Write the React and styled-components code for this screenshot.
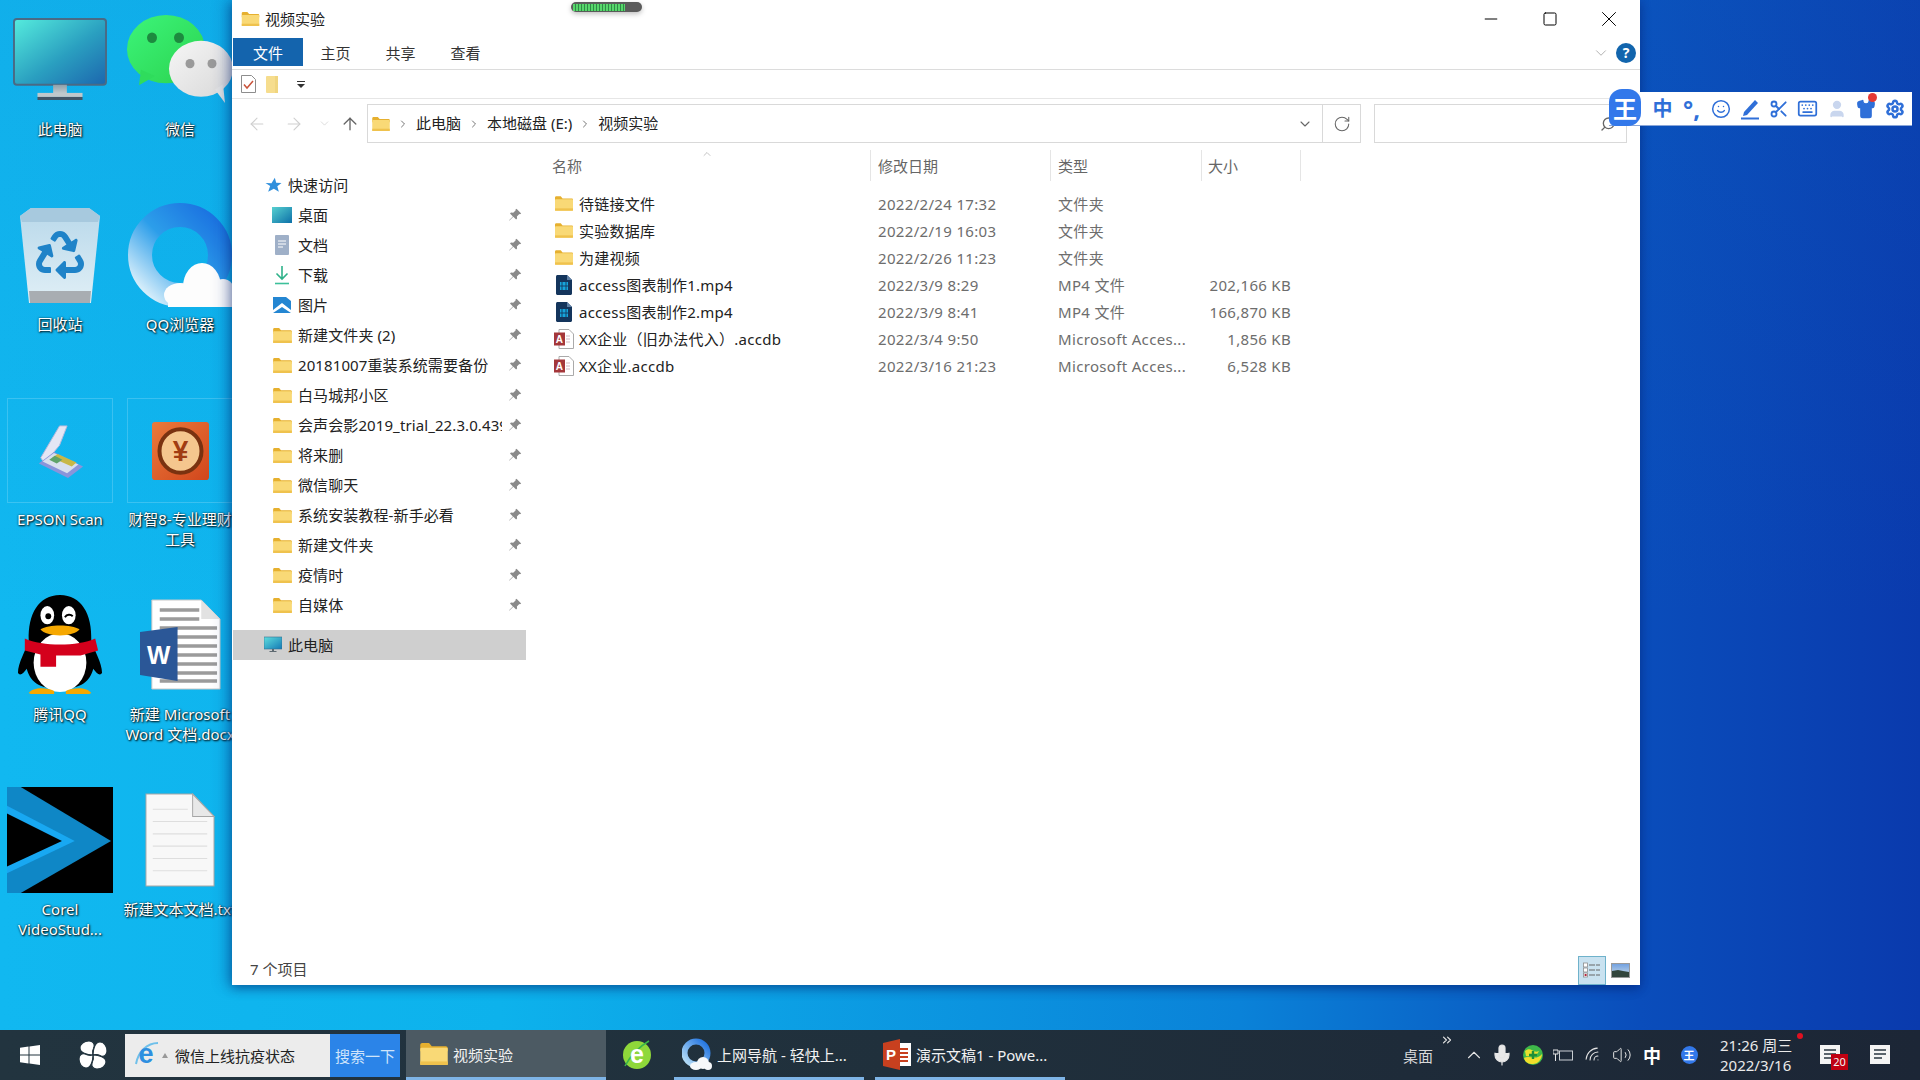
import React from 'react';
import styled, { createGlobalStyle } from 'styled-components';
import { FaRecycle } from 'react-icons/fa';
import {
  ArrowLeft,
  ArrowRight,
  ArrowUp,
  ChevronDown,
  ChevronRight,
  ChevronUp,
  ChevronsRight,
  Keyboard,
  Mic,
  Minus,
  RotateCw,
  Scissors,
  Search,
  Settings,
  Shirt,
  Smile,
  Square,
  User,
  Volume2,
  Wifi,
  X,
} from 'lucide-react';

const UI_FONT = '"Noto Sans", "Noto Sans CJK SC", sans-serif';

const GlobalStyle = createGlobalStyle`
  html, body {
    margin: 0;
    padding: 0;
    width: 1920px;
    height: 1080px;
    overflow: hidden;
    font-family: ${UI_FONT};
  }
  * {
    box-sizing: border-box;
  }
`;

/* ---------- small drawn icons ---------- */

function FolderIcon({ w = 20, h = 16 }) {
  return (
    <svg width={w} height={h} viewBox="0 0 20 16">
      <path d="M0 1.5C0 .7.6 0 1.4 0h5l2 2.4h10.2c.8 0 1.4.6 1.4 1.4V6H0z" fill="#e6b02f" />
      <rect x="0" y="3.4" width="20" height="12.6" rx="1" fill="#f9d976" />
      <rect x="0" y="13.4" width="20" height="2.6" fill="#efc24d" />
    </svg>
  );
}

function StarIcon() {
  return (
    <svg width="17" height="16" viewBox="0 0 24 24">
      <path d="M14 1l2 7.5 8 .5-6.3 4.800L20 22l-7.5-4.5L4 22l3-8.5L0 9l9 .2z" fill="#2f8fdc" />
    </svg>
  );
}

function PinIcon() {
  return (
    <svg width="14" height="14" viewBox="0 0 14 14">
      <path d="M8.5.8l4.700 4.700-1.200.7-.7-.2-2.400 2.400.2 2.200-1 1L5.300 8.800 1.500 12.600l-.4-.4L4.900 8.400 2 5.600l1-1 2.200.2L7.600 2.400l-.2-.7z" fill="#8a8a8a" />
    </svg>
  );
}

function DesktopSmall() {
  return (
    <svg width="20" height="16" viewBox="0 0 20 16">
      <defs>
        <linearGradient id="deskSmall" x1="0" y1="0" x2="1" y2="1">
          <stop offset="0" stopColor="#56d0d0" />
          <stop offset="1" stopColor="#0d70a8" />
        </linearGradient>
      </defs>
      <rect width="20" height="16" fill="url(#deskSmall)" />
    </svg>
  );
}

function DocSmall() {
  return (
    <svg width="14" height="20" viewBox="0 0 14 20">
      <rect width="14" height="20" rx="1" fill="#9fb0c8" />
      <path d="M3 6h8M3 9h8M3 12h5" stroke="#fff" strokeWidth="1" />
    </svg>
  );
}

function DownloadSmall() {
  return (
    <svg width="16" height="20" viewBox="0 0 16 20">
      <path d="M8 1v13M2.5 8.5L8 14l5.5-5.5" fill="none" stroke="#2fb28a" strokeWidth="1.6" />
      <path d="M1 18.5h14" stroke="#3cc09a" strokeWidth="1.6" />
    </svg>
  );
}

function PictureSmall() {
  return (
    <svg width="18" height="16" viewBox="0 0 18 16">
      <rect width="18" height="16" fill="#2486d2" />
      <path d="M0 13l9-7 9 7v3l-9-6-9 6z" fill="#fff" />
      <path d="M13 0h5v4z" fill="#fff" />
    </svg>
  );
}

function MonitorSmall() {
  return (
    <svg width="18" height="18" viewBox="0 0 18 18">
      <defs>
        <linearGradient id="monSmall" x1="0" y1="0" x2="1" y2="1">
          <stop offset="0" stopColor="#5fdede" />
          <stop offset="1" stopColor="#1379b5" />
        </linearGradient>
      </defs>
      <rect y="1" width="18" height="12" fill="url(#monSmall)" stroke="#35708f" strokeWidth=".6" />
      <path d="M8 13h2v2H8zM5.5 15h7v1h-7z" fill="#5f6a72" />
    </svg>
  );
}

function VideoFile() {
  return (
    <svg width="16" height="20" viewBox="0 0 16 20">
      <path d="M0 1.5C0 .7.7 0 1.5 0H11l5 5v13.5c0 .8-.7 1.5-1.5 1.5h-13C.7 20 0 19.3 0 18.5z" fill="#14355c" />
      <path d="M11 0l5 5h-5z" fill="#5d7fa5" />
      <rect x="4" y="7" width="8" height="8" fill="#16a5dc" />
      <path d="M6 7v8M10 7v8M4 11h8" stroke="#14355c" strokeWidth=".9" />
    </svg>
  );
}

function AccessFile() {
  return (
    <svg width="20" height="20" viewBox="0 0 20 20">
      <path d="M5 .5h10l4.5 4.5v14.5H5z" fill="#fff" stroke="#aaa" />
      <path d="M12 7h4M12 10h4M12 13h4" stroke="#c8a8b4" strokeWidth=".8" />
      <rect y="3.5" width="11" height="13" fill="#a4373a" />
      <text x="5.5" y="13.5" fill="#fff" fontSize="10" fontWeight="700" textAnchor="middle" fontFamily="Liberation Sans">A</text>
    </svg>
  );
}

function QuickCheck() {
  return (
    <svg width="15" height="18" viewBox="0 0 15 18">
      <path d="M.5.5h10l4 4v13H.5z" fill="#fff" stroke="#8d8d8d" />
      <path d="M3 9.5L6 13l6-7" fill="none" stroke="#c9533b" strokeWidth="1.5" />
    </svg>
  );
}

function QuickFolder() {
  return (
    <svg width="12" height="17" viewBox="0 0 12 17">
      <rect width="12" height="17" rx="1" fill="#f6dd8e" />
      <rect x="9" width="3" height="17" fill="#f0d57f" />
    </svg>
  );
}

function QuickDrop() {
  return (
    <svg width="8" height="7" viewBox="0 0 8 7">
      <path d="M0 0h8v1H0zM0 3h8L4 7z" fill="#333" />
    </svg>
  );
}

function DetailsView() {
  return (
    <svg width="18" height="16" viewBox="0 0 18 16">
      <g fill="#fff" stroke="#8d8d8d" strokeWidth=".8">
        <rect x=".5" y="1" width="4" height="4" />
        <rect x=".5" y="6" width="4" height="4" />
        <rect x=".5" y="11" width="4" height="4" />
      </g>
      <rect x="1.6" y="12" width="2" height="2" fill="#b0263c" />
      <path d="M6 3h11M6 8h11M6 13h11" stroke="#666" strokeWidth="1" strokeDasharray="6 1" />
    </svg>
  );
}

function PreviewView() {
  return (
    <svg width="19" height="15" viewBox="0 0 19 15">
      <defs>
        <linearGradient id="prevSky" x1="0" y1="0" x2="0" y2="1">
          <stop offset="0" stopColor="#6f9fe0" />
          <stop offset="1" stopColor="#d5e3ea" />
        </linearGradient>
      </defs>
      <rect x=".5" y=".5" width="18" height="14" fill="url(#prevSky)" stroke="#9a9a9a" />
      <path d="M1 8l6-1 5 1 6 1v5H1z" fill="#33463c" />
    </svg>
  );
}

function MonitorBig() {
  return (
    <svg width="94" height="83" viewBox="0 0 96 82" preserveAspectRatio="none">
      <defs>
        <linearGradient id="monBig" x1="0" y1="0" x2="1" y2="1">
          <stop offset="0" stopColor="#55ecdd" />
          <stop offset=".55" stopColor="#2a9fc0" />
          <stop offset="1" stopColor="#1c66ae" />
        </linearGradient>
        <linearGradient id="monStand" x1="0" y1="0" x2="0" y2="1">
          <stop offset="0" stopColor="#8fa0aa" />
          <stop offset="1" stopColor="#c4ccd0" />
        </linearGradient>
      </defs>
      <rect x="1" y="1" width="94" height="65" rx="3" fill="url(#monBig)" stroke="#4a6a85" strokeWidth="2" />
      <rect x="41" y="66" width="14" height="9" fill="url(#monStand)" />
      <rect x="25" y="74" width="46" height="4" fill="#c0c8cc" />
      <rect x="25" y="78" width="46" height="3" fill="#445566" />
    </svg>
  );
}

function WeChatBig() {
  return (
    <svg width="106" height="89" viewBox="0 0 106 86" preserveAspectRatio="none">
      <defs>
        <linearGradient id="wcGreen" x1="0" y1="0" x2="1" y2="1">
          <stop offset="0" stopColor="#3cf57a" />
          <stop offset="1" stopColor="#2bd24e" />
        </linearGradient>
        <linearGradient id="wcWhite" x1="0" y1="0" x2="1" y2="1">
          <stop offset="0" stopColor="#f6f6f6" />
          <stop offset="1" stopColor="#d8d8d8" />
        </linearGradient>
      </defs>
      <ellipse cx="39" cy="33" rx="39" ry="33" fill="url(#wcGreen)" />
      <path d="M14 53l-2 15 16-9z" fill="#2fdc5c" />
      <circle cx="25" cy="22" r="5" fill="#1d8a3f" />
      <circle cx="52" cy="22" r="5" fill="#1d8a3f" />
      <ellipse cx="74" cy="52" rx="32" ry="27" fill="url(#wcWhite)" />
      <path d="M88 72l10 13-2-18z" fill="#e4e4e4" />
      <circle cx="63" cy="47" r="4.5" fill="#9a9a9a" />
      <circle cx="85" cy="47" r="4.5" fill="#9a9a9a" />
    </svg>
  );
}

function RecycleBinBig() {
  return (
    <svg width="82" height="96" viewBox="0 0 82 96">
      <defs>
        <linearGradient id="binBody" x1="0" y1="0" x2="0" y2="1">
          <stop offset="0" stopColor="#b8d8ea" />
          <stop offset="1" stopColor="#e0eff6" />
        </linearGradient>
      </defs>
      <path d="M1 9L12 1h58l11 8-9 87H10z" fill="url(#binBody)" />
      <path d="M1 9L12 1h58l11 8-2 6H3z" fill="#a7c9de" />
      <path d="M10 84h62l-1 12H11z" fill="#a8adb2" />
      <FaRecycle x={17} y={24} size={48} color="#1f83c8" />
    </svg>
  );
}

function QQBrowserBig() {
  return (
    <svg width="104" height="104" viewBox="0 0 104 104">
      <defs>
        <linearGradient id="qbRing" x1="1" y1="0" x2="0" y2="1">
          <stop offset="0" stopColor="#1a6fe0" />
          <stop offset=".5" stopColor="#2c9eea" />
          <stop offset="1" stopColor="#e8f6fc" />
        </linearGradient>
      </defs>
      <circle cx="52" cy="52" r="40" fill="none" stroke="url(#qbRing)" strokeWidth="24" />
      <g fill="#fdfdfd">
        <ellipse cx="74" cy="84" rx="19" ry="24" />
        <ellipse cx="52" cy="92" rx="16" ry="12" />
        <ellipse cx="95" cy="90" rx="12" ry="14" />
        <rect x="40" y="92" width="64" height="12" />
      </g>
    </svg>
  );
}

function EpsonBig() {
  return (
    <svg width="47" height="56" viewBox="0 0 50 58" preserveAspectRatio="none">
      <path d="M4 36L24 3h8l-8 20L8 42z" fill="#e4e6f4" stroke="#b4b8dc" />
      <path d="M2 42l16-12 31 15-16 12z" fill="#8a94da" />
      <path d="M6 40l12-9 26 12-12 9z" fill="#d8e0ee" />
      <path d="M16 36l6-4 20 9-5 4z" fill="#c8b846" />
      <path d="M13 38l6-4 8 4-6 4z" fill="#5fa36a" />
    </svg>
  );
}

function CaizhiBig() {
  return (
    <svg width="57" height="58" viewBox="0 0 57 56" preserveAspectRatio="none">
      <defs>
        <linearGradient id="czBox" x1="0" y1="0" x2="1" y2="1">
          <stop offset="0" stopColor="#ea7a3c" />
          <stop offset="1" stopColor="#d1461c" />
        </linearGradient>
      </defs>
      <rect width="57" height="56" rx="3" fill="url(#czBox)" />
      <circle cx="28.5" cy="28" r="21" fill="#f5c68e" stroke="#7a3210" strokeWidth="4" />
      <text x="28.5" y="38" fill="#a13c12" fontSize="28" fontWeight="700" textAnchor="middle" fontFamily="Liberation Sans">¥</text>
    </svg>
  );
}

function PenguinBig() {
  return (
    <svg width="86" height="101" viewBox="0 0 88 100" preserveAspectRatio="none">
      <path d="M1 78c0-10 8-22 11-32C11 20 22 1 44 1s33 19 32 45c3 10 11 22 11 32-2 4-6 0-9-4-3 12-12 20-34 20S13 86 10 74c-3 4-7 8-9 4z" fill="#000" />
      <ellipse cx="44" cy="68" rx="27" ry="29" fill="#fff" />
      <path d="M8 44c18 8 54 8 72 0l3 12-18 5H40v11H24V60L8 56z" fill="#d4001c" />
      <ellipse cx="31" cy="21" rx="7" ry="9" fill="#fff" />
      <circle cx="32" cy="22" r="3" fill="#000" />
      <ellipse cx="53" cy="21" rx="7" ry="9" fill="#fff" />
      <path d="M49 23c2-3 6-3 8-1" stroke="#000" strokeWidth="2" fill="none" />
      <path d="M24 35c8-5 32-5 40 0-6 8-34 8-40 0z" fill="#f6a800" />
      <path d="M12 98c4-6 18-6 26-2v3H14zM50 96c8-4 22-4 26 2l-2 1H50z" fill="#f6a800" />
    </svg>
  );
}

function WordBig() {
  return (
    <svg width="81" height="92" viewBox="0 0 82 92" preserveAspectRatio="none">
      <path d="M12 1h50l19 19v70H12z" fill="#fff" stroke="#c8c8c8" />
      <path d="M62 1v19h19z" fill="#e2e2e2" />
      <path d="M20 11h40M20 20h40M20 29h58M20 38h58M20 47h58M20 56h58M20 65h58M20 74h58M20 82h58" stroke="#9b9b9b" strokeWidth="3.5" />
      <path d="M0 33l38-5v54l-38-6z" fill="#2b5797" />
      <text x="19" y="65" fill="#fff" fontSize="25" fontWeight="700" textAnchor="middle" fontFamily="Liberation Sans">W</text>
    </svg>
  );
}

function CorelBig() {
  return (
    <svg width="108" height="108" viewBox="0 0 108 108">
      <rect width="108" height="108" fill="#000" />
      <path d="M0 0h14l92 55-92 53H0z" fill="#0f87c6" />
      <path d="M0 19l69 36L0 88z" fill="#18a8f2" />
      <path d="M0 27l56 28L0 81z" fill="#000" />
    </svg>
  );
}

function TextFileBig() {
  return (
    <svg width="70" height="94" viewBox="0 0 72 92" preserveAspectRatio="none">
      <path d="M1 1h48l22 22v68H1z" fill="#f8f8f8" stroke="#a6a6a6" />
      <path d="M49 1v22h22z" fill="#e8e8e8" stroke="#a6a6a6" />
      <path d="M8 16h36M8 28h56M8 40h56M8 52h56M8 64h56M8 76h56" stroke="#dedede" />
    </svg>
  );
}

function WinLogo() {
  return (
    <svg width="20" height="20" viewBox="0 0 20 20">
      <path d="M0 2.8L8.5 1.5v8H0zM9.5 1.4L20 0v9.500H9.500zM0 10.500h8.500v8L0 17.200zM9.500 10.500H20V20L9.500 18.600z" fill="#fff" />
    </svg>
  );
}

function SwirlIcon() {
  const petal = 'M15 15C9 15 2 13 2 8c0-4 4-7 9-7 4 0 6 3 5 6-1 2-2 4-1 8z';
  return (
    <svg width="30" height="30" viewBox="0 0 30 30">
      {[0, 90, 180, 270].map((r) => (
        <path key={r} d={petal} fill="#fff" stroke="#22343f" strokeWidth="1.2" transform={`rotate(${r} 15 15)`} />
      ))}
    </svg>
  );
}

function IEIcon() {
  return (
    <svg width="26" height="30" viewBox="0 0 26 30">
      <path d="M3 24C5 12 14 3 25 3" fill="none" stroke="#6fc0ea" strokeWidth="2" />
      <text x="13" y="23" fill="#2e8fe0" fontSize="27" fontWeight="700" textAnchor="middle" fontFamily="Liberation Sans">e</text>
    </svg>
  );
}

function GreenEIcon() {
  return (
    <svg width="30" height="34" viewBox="0 0 30 34">
      <circle cx="15" cy="17" r="14" fill="#8fd83a" />
      <path d="M3 28C8 18 18 8 27 3" fill="none" stroke="#39b54a" strokeWidth="1.5" />
      <text x="15" y="25" fill="#fff" fontSize="25" fontWeight="700" textAnchor="middle" fontFamily="Liberation Sans">e</text>
    </svg>
  );
}

function QQBrowserSmall() {
  return (
    <svg width="30" height="34" viewBox="0 0 30 34">
      <defs>
        <linearGradient id="qbSmall" x1="1" y1="0" x2="0" y2="1">
          <stop offset="0" stopColor="#1a6fe0" />
          <stop offset="1" stopColor="#bfe4f8" />
        </linearGradient>
      </defs>
      <circle cx="14" cy="16" r="11.5" fill="none" stroke="url(#qbSmall)" strokeWidth="6" />
      <g fill="#f6f8fa">
        <ellipse cx="21" cy="26" rx="6" ry="6" />
        <ellipse cx="14" cy="29" rx="6" ry="4" />
        <ellipse cx="26" cy="29" rx="4" ry="4" />
      </g>
    </svg>
  );
}

function PptIcon() {
  return (
    <svg width="28" height="31" viewBox="0 0 28 31">
      <rect x="12" y="4" width="16" height="23" fill="#fff" />
      <path d="M15 10h10M15 14h10M15 18h10M15 22h10" stroke="#c8401f" strokeWidth="2" />
      <path d="M0 4l17-4v31L0 27z" fill="#c8401f" />
      <text x="8" y="21" fill="#fff" fontSize="15" fontWeight="700" textAnchor="middle" fontFamily="Liberation Sans">P</text>
    </svg>
  );
}

function PlugBattery() {
  return (
    <svg width="20" height="14" viewBox="0 0 20 14">
      <rect x="6.5" y="3" width="13" height="9" fill="none" stroke="#c9ced3" />
      <path d="M0 2h5v4H0zM2.5 6v7" stroke="#e6e6e6" fill="none" />
    </svg>
  );
}

function GreenShield() {
  return (
    <svg width="20" height="20" viewBox="0 0 20 20">
      <circle cx="10" cy="10" r="10" fill="#3eb84a" />
      <path d="M1 13c5-3 13 3 18-4 0 5-4 10-9 10S2 17 1 13z" fill="#f2dd2a" />
      <path d="M2 6c6-5 8 3 14 0-2 5-8 6-13 5z" fill="#e8e02e" />
      <path d="M10 6v8M6 10h8" stroke="#1e8f38" strokeWidth="2.4" />
    </svg>
  );
}

function NotifyDoc() {
  return (
    <svg width="20" height="20" viewBox="0 0 20 20">
      <rect width="20" height="19" fill="#f4f4f4" />
      <path d="M4 5h12M4 9h12M4 13h8" stroke="#27343f" strokeWidth="1.5" />
    </svg>
  );
}

function ImePen() {
  return (
    <svg width="20" height="22" viewBox="0 0 20 22">
      <path d="M4 14L15 2l3 3L7 17l-4 1z" fill="currentColor" />
      <path d="M1 20.5h18" stroke="currentColor" strokeWidth="2" />
    </svg>
  );
}

/* ---------- data ---------- */

const desktopItems = [
  { label: '此电脑', icon: <MonitorBig /> },
  { label: '微信', icon: <WeChatBig /> },
  { label: '回收站', icon: <RecycleBinBig /> },
  { label: 'QQ浏览器', icon: <QQBrowserBig /> },
  { label: 'EPSON Scan', icon: <EpsonBig />, framed: true },
  { label: '财智8-专业理财\n工具', icon: <CaizhiBig />, framed: true },
  { label: '腾讯QQ', icon: <PenguinBig /> },
  { label: '新建 Microsoft\nWord 文档.docx', icon: <WordBig /> },
  { label: 'Corel\nVideoStud...', icon: <CorelBig /> },
  { label: '新建文本文档.txt', icon: <TextFileBig /> },
];

const quickAccess = [
  { name: '桌面', icon: <DesktopSmall /> },
  { name: '文档', icon: <DocSmall /> },
  { name: '下载', icon: <DownloadSmall /> },
  { name: '图片', icon: <PictureSmall /> },
  { name: '新建文件夹 (2)' },
  { name: '20181007重装系统需要备份' },
  { name: '白马城邦小区' },
  { name: '会声会影2019_trial_22.3.0.439' },
  { name: '将来删' },
  { name: '微信聊天' },
  { name: '系统安装教程-新手必看' },
  { name: '新建文件夹' },
  { name: '疫情时' },
  { name: '自媒体' },
];

const files = [
  { name: '待链接文件', date: '2022/2/24 17:32', type: '文件夹', size: '', icon: <FolderIcon w={18} h={15} /> },
  { name: '实验数据库', date: '2022/2/19 16:03', type: '文件夹', size: '', icon: <FolderIcon w={18} h={15} /> },
  { name: '为建视频', date: '2022/2/26 11:23', type: '文件夹', size: '', icon: <FolderIcon w={18} h={15} /> },
  { name: 'access图表制作1.mp4', date: '2022/3/9 8:29', type: 'MP4 文件', size: '202,166 KB', icon: <VideoFile /> },
  { name: 'access图表制作2.mp4', date: '2022/3/9 8:41', type: 'MP4 文件', size: '166,870 KB', icon: <VideoFile /> },
  { name: 'XX企业（旧办法代入）.accdb', date: '2022/3/4 9:50', type: 'Microsoft Acces...', size: '1,856 KB', icon: <AccessFile /> },
  { name: 'XX企业.accdb', date: '2022/3/16 21:23', type: 'Microsoft Acces...', size: '6,528 KB', icon: <AccessFile /> },
];

/* ---------- app ---------- */

export default function App() {
  return (
    <Screen>
      <GlobalStyle />
      <Desktop>
        <IconGrid>
          {desktopItems.map((item) => (
            <DesktopItem key={item.label}>
              <IconBox $framed={item.framed}>{item.icon}</IconBox>
              <IconLabel>{item.label}</IconLabel>
            </DesktopItem>
          ))}
        </IconGrid>

        <ExplorerWindow>
          <VolumePill>
            <VolumeBars />
          </VolumePill>

          <TitleBar>
            <FolderIcon w={19} h={14} />
            <TitleText>视频实验</TitleText>
            <WindowControls>
              <ControlButton><Minus size={20} strokeWidth={1.2} /></ControlButton>
              <ControlButton><Square size={16} strokeWidth={1.5} /></ControlButton>
              <ControlButton><X size={26} strokeWidth={0.9} /></ControlButton>
            </WindowControls>
          </TitleBar>

          <RibbonTabs>
            <FileTab>文件</FileTab>
            <RibbonTab>主页</RibbonTab>
            <RibbonTab>共享</RibbonTab>
            <RibbonTab>查看</RibbonTab>
            <RibbonRight>
              <ChevronDown size={18} strokeWidth={1.2} color="#a9a9a9" />
              <HelpBadge>?</HelpBadge>
            </RibbonRight>
          </RibbonTabs>

          <QuickBar>
            <QuickCheck />
            <QuickFolder />
            <QuickDropSlot><QuickDrop /></QuickDropSlot>
          </QuickBar>

          <AddressRow>
            <NavButtons>
              <NavArrow $w={37}><ArrowLeft size={20} strokeWidth={1.3} color="#cfcfcf" /></NavArrow>
              <NavArrow $w={37}><ArrowRight size={20} strokeWidth={1.3} color="#cfcfcf" /></NavArrow>
              <NavArrow $w={25}><ChevronDown size={13} strokeWidth={1.3} color="#cfcfcf" /></NavArrow>
              <NavArrow $w={26}><ArrowUp size={20} strokeWidth={1.6} color="#666" /></NavArrow>
            </NavButtons>
            <AddressBox>
              <FolderIcon w={18} h={14} />
              <Crumb><ChevronRight size={12} color="#777" /></Crumb>
              <CrumbText>此电脑</CrumbText>
              <Crumb><ChevronRight size={12} color="#777" /></Crumb>
              <CrumbText>本地磁盘 (E:)</CrumbText>
              <Crumb><ChevronRight size={12} color="#777" /></Crumb>
              <CrumbText>视频实验</CrumbText>
              <AddressDrop><ChevronDown size={16} strokeWidth={1.6} color="#666" /></AddressDrop>
            </AddressBox>
            <RefreshBox><RotateCw size={18} strokeWidth={1.4} color="#666" /></RefreshBox>
            <SearchBox>
              <Search size={16} color="#666" strokeWidth={2} style={{ transform: 'scaleX(-1)' }} />
            </SearchBox>
          </AddressRow>

          <Body>
            <Sidebar>
              <NavRow $indent={32}>
                <NavIcon $w={18}><StarIcon /></NavIcon>
                <NavName>快速访问</NavName>
              </NavRow>
              {quickAccess.map((entry) => (
                <NavRow key={entry.name} $indent={40}>
                  <NavIcon $w={20}>{entry.icon || <FolderIcon w={19} h={15} />}</NavIcon>
                  <NavName>{entry.name}</NavName>
                  <PinIcon />
                </NavRow>
              ))}
              <NavRow $indent={32} $selected>
                <NavIcon $w={18}><MonitorSmall /></NavIcon>
                <NavName>此电脑</NavName>
              </NavRow>
            </Sidebar>

            <FilePane>
              <HeaderRow>
                <HeaderCell>名称<SortCaret><ChevronUp size={12} strokeWidth={1} color="#888" /></SortCaret></HeaderCell>
                <HeaderCell>修改日期</HeaderCell>
                <HeaderCell>类型</HeaderCell>
                <HeaderCell>大小</HeaderCell>
              </HeaderRow>
              {files.map((file) => (
                <FileRow key={file.name}>
                  <NameCell>
                    <FileIconSlot>{file.icon}</FileIconSlot>
                    {file.name}
                  </NameCell>
                  <MetaCell>{file.date}</MetaCell>
                  <MetaCell>{file.type}</MetaCell>
                  <SizeCell>{file.size}</SizeCell>
                </FileRow>
              ))}
            </FilePane>
          </Body>

          <StatusBar>
            <StatusText>7 个项目</StatusText>
            <ViewButtons>
              <ViewButton $active><DetailsView /></ViewButton>
              <ViewButton><PreviewView /></ViewButton>
            </ViewButtons>
          </StatusBar>
        </ExplorerWindow>

        <ImeBar>
          <ImeLogo>王</ImeLogo>
          <ImeGlyph>中</ImeGlyph>
          <ImeGlyph $wide>°,</ImeGlyph>
          <ImeSlot><Smile size={20} strokeWidth={1.8} /></ImeSlot>
          <ImeSlot><ImePen /></ImeSlot>
          <ImeSlot><Scissors size={20} strokeWidth={2.2} /></ImeSlot>
          <ImeSlot><Keyboard size={21} strokeWidth={2} /></ImeSlot>
          <ImeSlot $muted><User size={20} fill="currentColor" /></ImeSlot>
          <ImeSlot><Shirt size={20} fill="currentColor" /><ImeDot /></ImeSlot>
          <ImeSlot><Settings size={20} strokeWidth={3} /></ImeSlot>
        </ImeBar>
      </Desktop>

      <Taskbar>
        <TaskSlot $w={60}><WinLogo /></TaskSlot>
        <TaskSlot $w={65}><SwirlIcon /></TaskSlot>
        <SearchWidget>
          <SearchLeft>
            <IEIcon />
            <SearchCaret />
            <SearchQuery>微信上线抗疫状态</SearchQuery>
          </SearchLeft>
          <SearchAction>搜索一下</SearchAction>
        </SearchWidget>
        <TaskButton $w={200} $gap={6} $active>
          <FolderIcon w={28} h={22} />
          <TaskLabel>视频实验</TaskLabel>
        </TaskButton>
        <TaskSlot $w={62}><GreenEIcon /></TaskSlot>
        <TaskButton $w={190} $gap={6} $open>
          <QQBrowserSmall />
          <TaskLabel>上网导航 - 轻快上...</TaskLabel>
        </TaskButton>
        <TaskButton $w={190} $gap={11} $open>
          <PptIcon />
          <TaskLabel>演示文稿1 - Powe...</TaskLabel>
        </TaskButton>

        <Tray>
          <TrayText>桌面</TrayText>
          <TraySlot $w={28} $top><ChevronsRight size={14} strokeWidth={2} /></TraySlot>
          <TraySlot $w={26}><ChevronUp size={22} strokeWidth={1.2} /></TraySlot>
          <TraySlot $w={30}><Mic size={24} fill="#e8e8e8" strokeWidth={1.2} /></TraySlot>
          <TraySlot $w={31}><GreenShield /></TraySlot>
          <TraySlot $w={29}><PlugBattery /></TraySlot>
          <TraySlot $w={32}><Wifi size={19} strokeWidth={1.3} style={{ transform: 'rotate(-45deg)' }} /></TraySlot>
          <TraySlot $w={25}><Volume2 size={20} strokeWidth={1.2} /></TraySlot>
          <TraySlot $w={36}><TrayIme>中</TrayIme></TraySlot>
          <TraySlot $w={38}><TrayBrand>王</TrayBrand></TraySlot>
          <Clock>
            <span>21:26 周三</span>
            <span>2022/3/16</span>
            <ClockDot />
          </Clock>
          <TraySlot $w={50}>
            <NotifyDoc />
            <NotifyBadge>20</NotifyBadge>
          </TraySlot>
          <TraySlot $w={50}><NotifyDoc /></TraySlot>
        </Tray>
      </Taskbar>
    </Screen>
  );
}

/* ---------- styles ---------- */

const Screen = styled.div`
  width: 1920px;
  height: 1080px;
  display: flex;
  flex-direction: column;
  overflow: hidden;
  background:
    linear-gradient(180deg, rgba(16, 120, 200, 0.14) 0, rgba(16, 120, 200, 0) 620px),
    linear-gradient(90deg, #11b8f0 0, #0db2ec 500px, #0a82d8 1240px, #0a4dbb 1640px, #0a3aad 1920px);
`;

const Desktop = styled.div`
  position: relative;
  flex: 1;
  min-height: 0;
`;

const IconGrid = styled.div`
  display: grid;
  grid-template-columns: 120px 120px;
  grid-auto-rows: 195px;
`;

const DesktopItem = styled.div`
  display: flex;
  flex-direction: column;
  align-items: center;
  width: 120px;
`;

const IconBox = styled.div`
  width: 106px;
  height: 119px;
  display: flex;
  align-items: center;
  justify-content: center;
  flex-shrink: 0;
  ${(p) => p.$framed && `
    height: 105px;
    margin: 8px 0 6px;
    border: 1px solid rgba(255, 255, 255, 0.18);
  `}
`;

const IconLabel = styled.div`
  width: 120px;
  color: #fff;
  font-size: 15px;
  line-height: 20px;
  text-align: center;
  white-space: pre;
  text-shadow: 1px 1px 2px #000, 0 0 2px rgba(0, 0, 0, 0.7);
`;

const ExplorerWindow = styled.div`
  position: absolute;
  left: 232px;
  top: 0;
  width: 1408px;
  height: 985px;
  display: flex;
  flex-direction: column;
  background: #fff;
  color: #222;
  font-size: 15px;
  box-shadow: -6px 0 14px rgba(0, 40, 120, 0.28), 0 3px 10px rgba(0, 20, 90, 0.45);
`;

const VolumePill = styled.div`
  position: absolute;
  left: 339px;
  top: 2px;
  width: 71px;
  height: 10px;
  padding-left: 2px;
  display: flex;
  align-items: center;
  border-radius: 5px;
  background: #5b5b5b;
  box-shadow: 0 2px 5px rgba(0, 0, 0, 0.25);
`;

const VolumeBars = styled.div`
  width: 52px;
  height: 7px;
  background: repeating-linear-gradient(90deg, #57d66b 0, #57d66b 2px, #2f8a46 2px, #2f8a46 3px);
`;

const TitleBar = styled.div`
  height: 38px;
  flex-shrink: 0;
  display: flex;
  align-items: center;
  padding-left: 9px;
`;

const TitleText = styled.span`
  margin-left: 5px;
  line-height: 20px;
`;

const WindowControls = styled.div`
  margin-left: auto;
  margin-right: 2px;
  display: flex;
  align-self: flex-start;
`;

const ControlButton = styled.div`
  width: 59px;
  height: 37px;
  display: flex;
  align-items: center;
  justify-content: center;
  color: #000;
`;

const RibbonTabs = styled.div`
  height: 32px;
  flex-shrink: 0;
  display: flex;
  align-items: flex-start;
  padding-left: 1px;
  border-bottom: 1px solid #dcdcdc;
`;

const FileTab = styled.div`
  width: 70px;
  height: 28px;
  display: flex;
  align-items: center;
  justify-content: center;
  background: #1464ad;
  color: #fff;
`;

const RibbonTab = styled.div`
  width: 65px;
  height: 28px;
  display: flex;
  align-items: center;
  justify-content: center;
  color: #333;
`;

const RibbonRight = styled.div`
  margin-left: auto;
  margin-right: 4px;
  height: 30px;
  display: flex;
  align-items: center;
  gap: 6px;
`;

const HelpBadge = styled.div`
  width: 20px;
  height: 20px;
  border-radius: 50%;
  background: #1265ad;
  color: #fff;
  font-size: 14px;
  font-weight: 700;
  line-height: 20px;
  text-align: center;
`;

const QuickBar = styled.div`
  height: 29px;
  flex-shrink: 0;
  display: flex;
  align-items: center;
  padding-left: 9px;
  gap: 10px;
  border-bottom: 1px solid #e6e6e6;
`;

const QuickDropSlot = styled.div`
  margin-left: 9px;
  display: flex;
`;

const AddressRow = styled.div`
  height: 51px;
  flex-shrink: 0;
  display: flex;
  align-items: flex-start;
  padding-top: 5px;
`;

const NavButtons = styled.div`
  width: 135px;
  height: 39px;
  padding-left: 6px;
  display: flex;
  align-items: center;
`;

const NavArrow = styled.div`
  width: ${(p) => p.$w}px;
  display: flex;
  justify-content: center;
`;

const AddressBox = styled.div`
  width: 955px;
  height: 39px;
  display: flex;
  align-items: center;
  padding-left: 4px;
  border: 1px solid #d9d9d9;
  border-right: 0;
`;

const Crumb = styled.div`
  width: 26px;
  display: flex;
  justify-content: center;
`;

const CrumbText = styled.span`
  line-height: 20px;
  margin-top: -2px;
  color: #222;
`;

const AddressDrop = styled.div`
  margin-left: auto;
  margin-right: 9px;
  display: flex;
`;

const RefreshBox = styled.div`
  width: 39px;
  height: 39px;
  display: flex;
  align-items: center;
  justify-content: center;
  border: 1px solid #d9d9d9;
`;

const SearchBox = styled.div`
  width: 253px;
  height: 39px;
  margin-left: 13px;
  padding-right: 10px;
  display: flex;
  align-items: center;
  justify-content: flex-end;
  border: 1px solid #d9d9d9;
`;

const Body = styled.div`
  flex: 1;
  min-height: 0;
  display: flex;
`;

const Sidebar = styled.div`
  width: 294px;
  flex-shrink: 0;
  padding-top: 20px;
  display: flex;
  flex-direction: column;
`;

const NavRow = styled.div`
  height: 30px;
  flex-shrink: 0;
  display: flex;
  align-items: center;
  gap: 6px;
  padding-left: ${(p) => p.$indent}px;
  padding-right: 4px;
  ${(p) => p.$selected && `
    margin-top: 10px;
    margin-left: 1px;
    padding-left: 31px;
    background: #cfcfcf;
  `}
`;

const NavIcon = styled.div`
  width: ${(p) => p.$w}px;
  display: flex;
  justify-content: center;
  flex-shrink: 0;
`;

const NavName = styled.div`
  flex: 1;
  min-width: 0;
  overflow: hidden;
  white-space: nowrap;
  line-height: 20px;
  letter-spacing: 0.1px;
  color: #222;
`;

const FilePane = styled.div`
  flex: 1;
  min-width: 0;
  padding-left: 25px;
`;

const COLUMNS = '320px 180px 151px 99px';

const HeaderRow = styled.div`
  position: relative;
  display: grid;
  grid-template-columns: ${COLUMNS};
  height: 31px;
  margin-bottom: 9px;
`;

const HeaderCell = styled.div`
  display: flex;
  align-items: center;
  padding-left: 7px;
  color: #666;
  border-right: 1px solid #e5e5e5;
  &:first-child {
    padding-left: 1px;
  }
  &:last-child {
    padding-left: 6px;
  }
`;

const SortCaret = styled.span`
  position: absolute;
  left: 150px;
  top: -2px;
  display: flex;
`;

const FileRow = styled.div`
  display: grid;
  grid-template-columns: ${COLUMNS};
  height: 27px;
  align-items: center;
`;

const NameCell = styled.div`
  display: flex;
  align-items: center;
  gap: 5px;
  white-space: nowrap;
  padding-left: 3px;
  letter-spacing: 0.25px;
  color: #222;
`;

const FileIconSlot = styled.span`
  width: 20px;
  display: flex;
  justify-content: center;
  flex-shrink: 0;
`;

const MetaCell = styled.div`
  padding-left: 7px;
  color: #6d6d6d;
  letter-spacing: 0.33px;
  white-space: nowrap;
`;

const SizeCell = styled.div`
  padding-right: 10px;
  text-align: right;
  letter-spacing: 0.3px;
  color: #6d6d6d;
`;

const StatusBar = styled.div`
  height: 30px;
  flex-shrink: 0;
  display: flex;
  align-items: center;
  padding-left: 18px;
  padding-right: 10px;
`;

const StatusText = styled.span`
  color: #444;
  line-height: 20px;
  margin-top: -2px;
`;

const ViewButtons = styled.div`
  margin-left: auto;
  display: flex;
  align-items: center;
  gap: 4px;
`;

const ViewButton = styled.div`
  width: ${(p) => (p.$active ? '28px' : '20px')};
  height: ${(p) => (p.$active ? '29px' : '16px')};
  display: flex;
  align-items: center;
  justify-content: center;
  ${(p) => p.$active && `
    background: #c9e2f0;
    border: 1px solid #6fb2cb;
  `}
`;

const ImeBar = styled.div`
  position: absolute;
  left: 1609px;
  top: 92px;
  width: 303px;
  height: 34px;
  display: flex;
  align-items: center;
  background: #fff;
  color: #2f6fd8;
  border-bottom: 1px solid #8aa6d8;
`;

const ImeLogo = styled.div`
  width: 32px;
  height: 37px;
  margin-top: -3px;
  margin-right: 7px;
  flex-shrink: 0;
  display: flex;
  align-items: center;
  justify-content: center;
  border-radius: 13px 13px 13px 6px;
  background: #3278ea;
  color: #fff;
  font-size: 24px;
  font-weight: 700;
`;

const ImeGlyph = styled.div`
  width: 29px;
  text-align: center;
  font-size: ${(p) => (p.$wide ? '24px' : '20px')};
  font-weight: 700;
  line-height: 24px;
  color: #2f6fd8;
`;

const ImeSlot = styled.div`
  position: relative;
  width: 29px;
  display: flex;
  justify-content: center;
  color: ${(p) => (p.$muted ? '#c9d6ee' : '#2f6fd8')};
`;

const ImeDot = styled.span`
  position: absolute;
  right: 3px;
  top: -6px;
  width: 9px;
  height: 9px;
  border-radius: 50%;
  background: #e53935;
`;

const Taskbar = styled.div`
  height: 50px;
  flex-shrink: 0;
  display: flex;
  align-items: stretch;
  background: linear-gradient(90deg, #22343f 0, #20303c 900px, #1c2636 1920px);
  color: #fff;
`;

const TaskSlot = styled.div`
  width: ${(p) => p.$w}px;
  flex-shrink: 0;
  display: flex;
  align-items: center;
  justify-content: center;
`;

const SearchWidget = styled.div`
  width: 275px;
  height: 43px;
  align-self: center;
  flex-shrink: 0;
  display: flex;
`;

const SearchLeft = styled.div`
  flex: 1;
  display: flex;
  align-items: center;
  padding-left: 8px;
  background: #ececec;
  color: #222;
`;

const SearchCaret = styled.span`
  margin-left: 3px;
  width: 0;
  height: 0;
  border-left: 3px solid transparent;
  border-right: 3px solid transparent;
  border-bottom: 5px solid #999;
`;

const SearchQuery = styled.span`
  margin-left: 7px;
  font-size: 15px;
  white-space: nowrap;
`;

const SearchAction = styled.div`
  width: 70px;
  display: flex;
  align-items: center;
  justify-content: center;
  background: #2b84e8;
  color: #cfe4fb;
  font-size: 15px;
  white-space: nowrap;
`;

const TaskButton = styled.div`
  width: ${(p) => p.$w}px;
  margin-left: ${(p) => p.$gap}px;
  flex-shrink: 0;
  display: flex;
  align-items: center;
  gap: 5px;
  padding-left: 8px;
  padding-top: 1px;
  ${(p) => p.$active && 'padding-left: 14px; background: #4c5a63;'}
  ${(p) => (p.$active || p.$open) && 'border-bottom: 3px solid #7eb4e6;'}
`;

const TaskLabel = styled.span`
  font-size: 15px;
  white-space: nowrap;
  color: #f2f2f2;
`;

const Tray = styled.div`
  margin-left: auto;
  padding-right: 15px;
  display: flex;
  align-items: stretch;
`;

const TrayText = styled.div`
  width: 30px;
  display: flex;
  align-items: center;
  white-space: nowrap;
  font-size: 15px;
  color: #d8d8d8;
`;

const TraySlot = styled.div`
  position: relative;
  width: ${(p) => p.$w}px;
  display: flex;
  align-items: ${(p) => (p.$top ? 'flex-start' : 'center')};
  justify-content: center;
  padding-top: ${(p) => (p.$top ? '3px' : '0')};
  color: #e4e4e4;
`;

const TrayIme = styled.span`
  font-size: 18px;
  font-weight: 700;
  color: #fff;
`;

const TrayBrand = styled.span`
  width: 17px;
  height: 18px;
  display: flex;
  align-items: center;
  justify-content: center;
  border-radius: 50%;
  background: #3278ea;
  color: #fff;
  font-size: 11px;
  font-weight: 700;
`;

const Clock = styled.div`
  position: relative;
  width: 85px;
  margin-left: 12px;
  display: flex;
  flex-direction: column;
  justify-content: center;
  font-size: 15px;
  line-height: 20px;
  color: #eaeaea;
  white-space: nowrap;
`;

const ClockDot = styled.span`
  position: absolute;
  left: 77px;
  top: 3px;
  width: 6px;
  height: 6px;
  border-radius: 50%;
  background: #e01020;
`;

const NotifyBadge = styled.span`
  position: absolute;
  left: 26px;
  top: 24px;
  width: 17px;
  height: 16px;
  background: #c00012;
  color: #f4f4f4;
  font-size: 11px;
  line-height: 16px;
  text-align: center;
`;
